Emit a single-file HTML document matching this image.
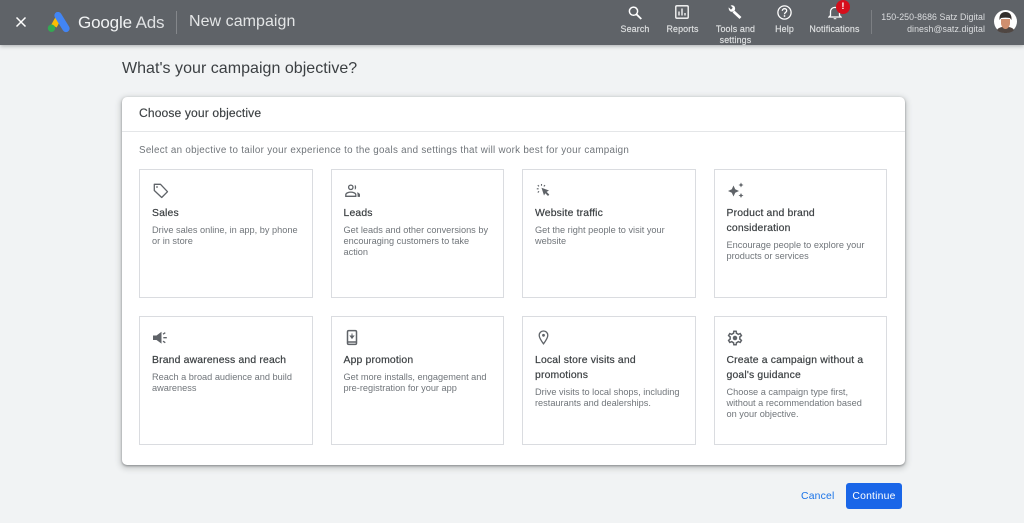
<!DOCTYPE html>
<html><head><meta charset="utf-8">
<style>
html,body{margin:0;padding:0;}
body{width:1024px;height:523px;overflow:hidden;position:relative;background:#f1f3f4;font-family:"Liberation Sans",sans-serif;}
#w{position:absolute;left:0;top:0;width:1024px;height:523px;overflow:hidden;background:#f1f3f4;filter:blur(.3px);}
.t{position:absolute;white-space:nowrap;}
#bar{position:absolute;left:0;top:0;width:1024px;height:45px;background:#5f6368;box-shadow:0 1px 4px rgba(60,64,67,.4);}
.nav{position:absolute;top:24px;color:#dfe1e2;font-size:8.9px;line-height:10.5px;text-align:center;white-space:nowrap;letter-spacing:.14px;-webkit-text-stroke:.15px #dfe1e2;transform:translateX(-50%);}
#main{position:absolute;left:122px;top:97px;width:783px;height:368px;background:#fff;border-radius:5px;box-shadow:0 1px 2px rgba(60,64,67,.5),0 2px 6px 2px rgba(60,64,67,.2);}
.card{position:absolute;width:172px;height:127px;border:1px solid #dadce0;background:#fff;}
.n{width:171px;}
.card svg{position:absolute;left:12px;top:12px;}
.h{position:absolute;left:12px;top:37px;font-size:10.4px;line-height:14.5px;color:#3c4043;white-space:nowrap;letter-spacing:.17px;-webkit-text-stroke:.2px #3c4043;}
.d{position:absolute;left:12px;top:55px;font-size:9.2px;line-height:11px;color:#70757a;white-space:nowrap;letter-spacing:.0px;}
.n .h,.n .d{left:11.5px;}
.two .d{top:70px;}
svg{display:block}
</style></head><body><div id="w">
<div id="bar">
<svg style="position:absolute;left:15px;top:16px" width="12" height="12" viewBox="0 0 12 12"><path d="M1.5 1.5L10.5 10.5M10.5 1.5L1.5 10.5" stroke="#fff" stroke-width="1.5"/></svg>
<svg style="position:absolute;left:47px;top:12px" width="23" height="21" viewBox="0 0 23 21"><path d="M7 14L12 5" stroke="#fbbc04" stroke-width="6"/><path d="M11 3.5L19 16.5" stroke="#4285f4" stroke-width="7.2" stroke-linecap="round"/><circle cx="4.500" cy="16.200" r="3.700" fill="#34a853"/></svg>
<div class="t" style="left:78px;top:13px;font-size:17px;line-height:20px;color:#f1f3f4;letter-spacing:-.15px">Google <span style="color:#dfe1e3">Ads</span></div>
<div style="position:absolute;left:176px;top:11px;width:1px;height:23px;background:#84878b"></div>
<div class="t" style="left:189px;top:12px;font-size:16px;line-height:20px;color:#e3e5e6;letter-spacing:.05px">New campaign</div>

<svg style="position:absolute;left:627px;top:5px" width="16" height="16" viewBox="0 0 16 16"><circle cx="6.500" cy="6.200" r="4.100" fill="none" stroke="#fff" stroke-width="1.500"/><path d="M9.500 9.300L14.300 14" stroke="#fff" stroke-width="1.800"/></svg>
<div class="nav" style="left:635px">Search</div>
<svg style="position:absolute;left:675px;top:5px" width="14" height="14" viewBox="0 0 14 14"><rect x=".8" y=".8" width="12.400" height="12.400" rx="1" fill="none" stroke="#fff" stroke-width="1.300"/><path d="M4 6.500V10.500M7 3.500V10.500M10 8V10.500" stroke="#fff" stroke-width="1.300"/></svg>
<div class="nav" style="left:682.500px">Reports</div>
<svg style="position:absolute;left:727px;top:4px" width="16" height="16" viewBox="0 0 16 16"><path d="M6.500 7.500L13.500 14" stroke="#fff" stroke-width="2.800"/><path d="M1.700 3.400L4 5.600 5.800 3.800 3.600 1.500C5.800.5 8.400 2 8.100 5 8 6.700 6 8.300 3.800 7.600 2.400 7.100 1.400 5.300 1.700 3.400Z" fill="#fff"/></svg>
<div class="nav" style="left:735.500px">Tools and<br>settings</div>
<svg style="position:absolute;left:777px;top:5px" width="15" height="15" viewBox="0 0 15 15"><circle cx="7.500" cy="7.500" r="6.600" fill="none" stroke="#fff" stroke-width="1.300"/><path d="M5.300 5.800C5.400 3 9.700 3 9.700 5.700 9.700 7.200 7.500 7.300 7.500 9.200" fill="none" stroke="#fff" stroke-width="1.300"/><circle cx="7.500" cy="11" r=".9" fill="#fff"/></svg>
<div class="nav" style="left:784.500px">Help</div>
<svg style="position:absolute;left:828px;top:5px" width="14" height="15" viewBox="0 0 14 15"><path d="M2.500 10.500V7C2.500 4 4.500 2.400 7 2.400S11.500 4 11.500 7V10.500L13 12H1Z" fill="none" stroke="#fff" stroke-width="1.300"/><path d="M5.700 13.200H8.300V14.200H5.700Z" fill="#fff"/></svg>
<div style="position:absolute;left:836px;top:0;width:14px;height:14px;border-radius:7px;background:#d50f1c"></div>
<div class="t" style="left:841px;top:1px;width:4px;height:11px;color:#fff;font-size:9.500px;font-weight:bold;line-height:11px;text-align:center">!</div>
<div class="nav" style="left:834.500px">Notifications</div>
<div style="position:absolute;left:871px;top:10px;width:1px;height:24px;background:#7c7f83"></div>
<div class="t" style="right:39px;top:10.500px;font-size:8.800px;line-height:12px;color:#dcdee0;text-align:right;letter-spacing:.08px">150-250-8686 Satz Digital<br>dinesh@satz.digital</div>
<svg style="position:absolute;left:994px;top:10px" width="23" height="24" viewBox="0 0 23 24"><circle cx="11.500" cy="11.500" r="11.500" fill="#fff"/><path d="M3 20C5 15.500 18 15.500 20 20 17 24 6 24 3 20Z" fill="#4f4642"/><path d="M7 9H16V14C15 18 13 19 11.500 19S8 18 7 14Z" fill="#cf8f6f"/><path d="M5.500 10C5 4 8 2 11.500 2S18 4 17.500 10L16 8C13 7.500 10 7.500 7 8Z" fill="#332e2c"/></svg>
</div>

<div class="t" style="left:122px;top:59px;font-size:16px;line-height:20px;color:#3c4043;letter-spacing:.03px">What's your campaign objective?</div>

<div id="main">
<div class="t" style="left:17px;top:9px;font-size:12.100px;line-height:15px;color:#3c4043;letter-spacing:.12px;-webkit-text-stroke:.15px #3c4043">Choose your objective</div>
<div style="position:absolute;left:0;top:34px;width:783px;height:1px;background:#e4e6e8"></div>
<div class="t" style="left:17px;top:47px;font-size:9.800px;line-height:13px;color:#70757a;letter-spacing:.28px">Select an objective to tailor your experience to the goals and settings that will work best for your campaign</div>

<div class="card" style="left:17px;top:72px">
<svg width="18" height="18" viewBox="0 0 18 18"><path d="M2.300 2.300H8.500L15.500 9.700 9.700 15.500 2.300 8.500Z" fill="none" stroke="#5f6368" stroke-width="1.300" stroke-linejoin="round"/><circle cx="5" cy="5" r=".9" fill="#5f6368"/></svg>
<div class="h">Sales</div><div class="d">Drive sales online, in app, by phone<br>or in store</div></div>

<div class="card n" style="left:209px;top:72px">
<svg style="left:11.500px" width="18" height="18" viewBox="0 0 18 18"><circle cx="6.800" cy="5.300" r="2.200" fill="none" stroke="#5f6368" stroke-width="1.300"/><path d="M1.800 14.300V12.800C1.800 11 5 10.100 6.800 10.100S11.800 11 11.800 12.800V14.300Z" fill="none" stroke="#5f6368" stroke-width="1.300"/><path d="M10.800 3C12.600 3.200 12.600 7.400 10.800 7.600ZM13 10.300C14.500 10.800 16 11.500 16 12.800V14.900H13.600C13.600 12.800 13.600 11.500 13 10.300Z" fill="#5f6368"/></svg>
<div class="h">Leads</div><div class="d">Get leads and other conversions by<br>encouraging customers to take<br>action</div></div>

<div class="card" style="left:400px;top:72px">
<svg width="18" height="18" viewBox="0 0 18 18"><path d="M6.500 5.800L14 8.500 11.600 9.900 14.300 12.600 13 14 10.300 11.300 9 13.500Z" fill="#5f6368"/><path d="M6.500 2V3.800M1.800 6.800H3.600M2.800 3.200L4 4.400M10 3.200L8.800 4.400M2.800 10.500L4 9.300" stroke="#5f6368" stroke-width="1.100"/></svg>
<div class="h">Website traffic</div><div class="d">Get the right people to visit your<br>website</div></div>

<div class="card two n" style="left:592px;top:72px">
<svg style="left:11.500px;top:11px" width="18" height="18" viewBox="0 0 18 18"><path d="M6.500 4.500L8.200 8.300 12 10 8.200 11.700 6.500 15.500 4.800 11.700 1 10 4.800 8.300Z" fill="#5f6368"/><path d="M14 1.500L14.800 3.200 16.500 4 14.800 4.800 14 6.500 13.200 4.800 11.500 4 13.200 3.200ZM14 12L14.800 13.700 16.500 14.500 14.800 15.300 14 17 13.200 15.300 11.500 14.500 13.200 13.700Z" fill="#5f6368"/></svg>
<div class="h">Product and brand<br>consideration</div><div class="d">Encourage people to explore your<br>products or services</div></div>

<div class="card" style="left:17px;top:219px">
<svg width="18" height="18" viewBox="0 0 18 18"><path d="M1 6.500H4.500L9.500 2.800V14.600L4.500 11H1Z" fill="#5f6368"/><path d="M11.300 8.700H14.800M11 5.200L13.300 3.700M11 12.200L13.300 13.700" stroke="#5f6368" stroke-width="1.300"/></svg>
<div class="h">Brand awareness and reach</div><div class="d">Reach a broad audience and build<br>awareness</div></div>

<div class="card n" style="left:209px;top:219px">
<svg width="18" height="18" viewBox="0 0 18 18"><rect x="3.500" y="1.600" width="9" height="13.800" rx="1.300" fill="none" stroke="#5f6368" stroke-width="1.500"/><path d="M3.500 13H12.500" stroke="#5f6368" stroke-width="1.500"/><path d="M8 4.500V8.500M6.300 7L8 9.300 9.700 7Z" stroke="#5f6368" stroke-width="1" fill="#5f6368"/></svg>
<div class="h">App promotion</div><div class="d">Get more installs, engagement and<br>pre-registration for your app</div></div>

<div class="card two" style="left:400px;top:219px">
<svg width="18" height="18" viewBox="0 0 18 18"><path d="M8.500 2C6 2 4.200 3.900 4.200 6.300 4.200 9.200 8.500 14.800 8.500 14.800S12.800 9.200 12.800 6.300C12.800 3.900 11 2 8.500 2Z" fill="none" stroke="#5f6368" stroke-width="1.300"/><circle cx="8.500" cy="6.300" r="1.400" fill="#5f6368"/></svg>
<div class="h">Local store visits and<br>promotions</div><div class="d">Drive visits to local shops, including<br>restaurants and dealerships.</div></div>

<div class="card two n" style="left:592px;top:219px">
<svg style="left:10.500px;top:11.500px" width="18" height="18" viewBox="0 0 24 24"><path fill="#5f6368" d="M19.430 12.980c.04-.32.07-.64.07-.98 0-.34-.03-.66-.07-.98l2.110-1.650c.19-.15.24-.42.12-.64l-2-3.460c-.09-.16-.26-.25-.44-.25-.06 0-.12.01-.17.03l-2.490 1c-.52-.4-1.080-.73-1.690-.98l-.38-2.650C14.460 2.180 14.250 2 14 2h-4c-.25 0-.46.18-.49.42l-.38 2.650c-.61.25-1.170.59-1.690.98l-2.490-1c-.06-.02-.12-.03-.18-.03-.17 0-.34.09-.43.25l-2 3.460c-.13.22-.07.49.12.64l2.110 1.650c-.04.32-.07.65-.07.98 0 .33.03.66.07.98l-2.110 1.650c-.19.15-.24.42-.12.64l2 3.460c.09.16.26.25.44.25.06 0 .12-.01.17-.03l2.490-1c.52.4 1.080.73 1.690.98l.38 2.650c.03.24.24.42.49.42h4c.25 0 .46-.18.49-.42l.38-2.650c.61-.25 1.170-.59 1.690-.98l2.490 1c.06.02.12.03.18.03.17 0 .34-.09.43-.25l2-3.460c.12-.22.07-.49-.12-.64l-2.110-1.650zm-1.980-1.710c.04.31.05.52.05.73 0 .21-.02.43-.05.73l-.14 1.130.89.7 1.080.84-.7 1.210-1.270-.51-1.040-.42-.9.68c-.43.32-.84.56-1.250.73l-1.060.43-.16 1.130-.2 1.350h-1.400l-.19-1.350-.16-1.130-1.060-.43c-.43-.18-.83-.41-1.230-.71l-.91-.7-1.060.43-1.270.51-.7-1.210 1.080-.84.89-.7-.14-1.130c-.03-.31-.05-.54-.05-.74s.02-.43.05-.73l.14-1.130-.89-.7-1.080-.84.7-1.210 1.270.51 1.040.42.9-.68c.43-.32.84-.56 1.250-.73l1.060-.43.16-1.130.2-1.350h1.390l.19 1.350.16 1.130 1.060.43c.43.18.83.41 1.230.71l.91.7 1.060-.43 1.270-.51.7 1.210-1.070.85-.89.7.14 1.130z"/><circle cx="12" cy="12" r="3" fill="#5f6368"/></svg>
<div class="h">Create a campaign without a<br>goal's guidance</div><div class="d">Choose a campaign type first,<br>without a recommendation based<br>on your objective.</div></div>
</div>

<div class="t" style="left:801px;top:490px;font-size:10.400px;line-height:13px;color:#1a73e8;letter-spacing:.2px">Cancel</div>
<div style="position:absolute;left:846px;top:483px;width:56px;height:26px;background:#1a66e8;border-radius:3px;color:#fff;font-size:10.400px;line-height:27px;text-align:center;letter-spacing:.2px">Continue</div>
</div></body></html>
